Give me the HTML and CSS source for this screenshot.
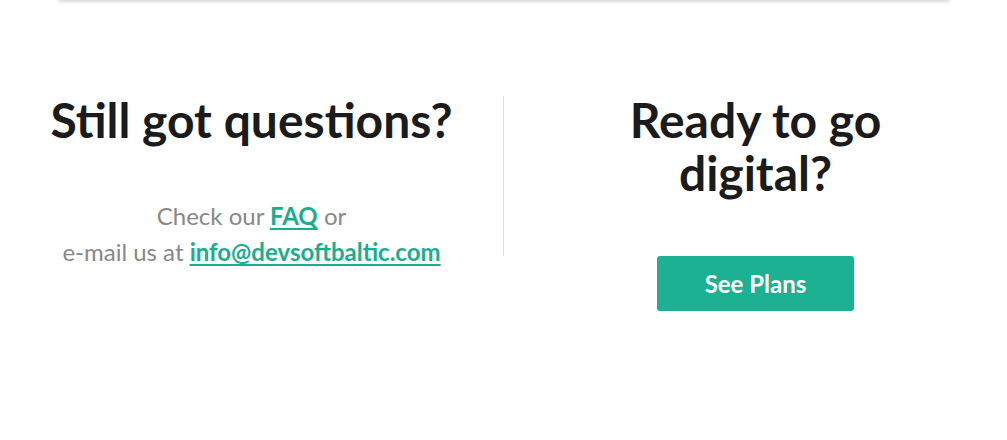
FILE: index.html
```html
<!DOCTYPE html>
<html lang="en">
<head>
<meta charset="utf-8">
<title>Contact</title>
<link rel="stylesheet" href="styles.css">
</head>
<body>
<div class="card-edge"></div>
<section class="cta">
  <div class="col">
    <h2 class="title">Still got questions?</h2>
    <p class="text">Check our <a href="#">FAQ</a> or<br>e-mail us at <a href="#">info@devsoftbaltic.com</a></p>
  </div>
  <div class="divider"></div>
  <div class="col">
    <h2 class="title narrow">Ready to go digital?</h2>
    <a class="btn" href="#">See Plans</a>
  </div>
</section>
</body>
</html>
```
FILE: styles.css
```css
html, body {
  margin: 0;
  padding: 0;
  background: #fff;
}
body {
  font-family: Lato, "Open Sans", sans-serif;
  width: 1007px;
  height: 440px;
  overflow: hidden;
}
.card-edge {
  width: 892px;
  height: 6px;
  margin: -6px auto 0;
  background: #fff;
  box-shadow: 0 1px 4px rgba(0, 0, 0, 0.22);
}
.cta {
  display: grid;
  grid-template-columns: 1fr 1px 1fr;
  margin-top: 93px;
}
.col {
  display: flex;
  flex-direction: column;
  align-items: center;
  text-align: center;
}
.divider {
  background: #e2e2e2;
  height: 160px;
  margin-top: 3px;
}
.title {
  margin: 0;
  font-size: 48px;
  line-height: 53px;
  font-weight: 700;
  color: #1b1b1b;
}
.narrow {
  max-width: 300px;
}
.text {
  margin: 52px 0 0;
  font-size: 24px;
  line-height: 36px;
  color: #888888;
}
.text a {
  color: #1aae8f;
  font-weight: 700;
  text-decoration: underline;
  text-decoration-thickness: 2px;
  text-underline-offset: 3px;
}
.btn {
  display: flex;
  align-items: center;
  justify-content: center;
  margin-top: 57px;
  width: 197px;
  height: 55px;
  border-radius: 3px;
  background: #1bb192;
  color: #fff;
  font-size: 24px;
  font-weight: 700;
  text-decoration: none;
}
```
